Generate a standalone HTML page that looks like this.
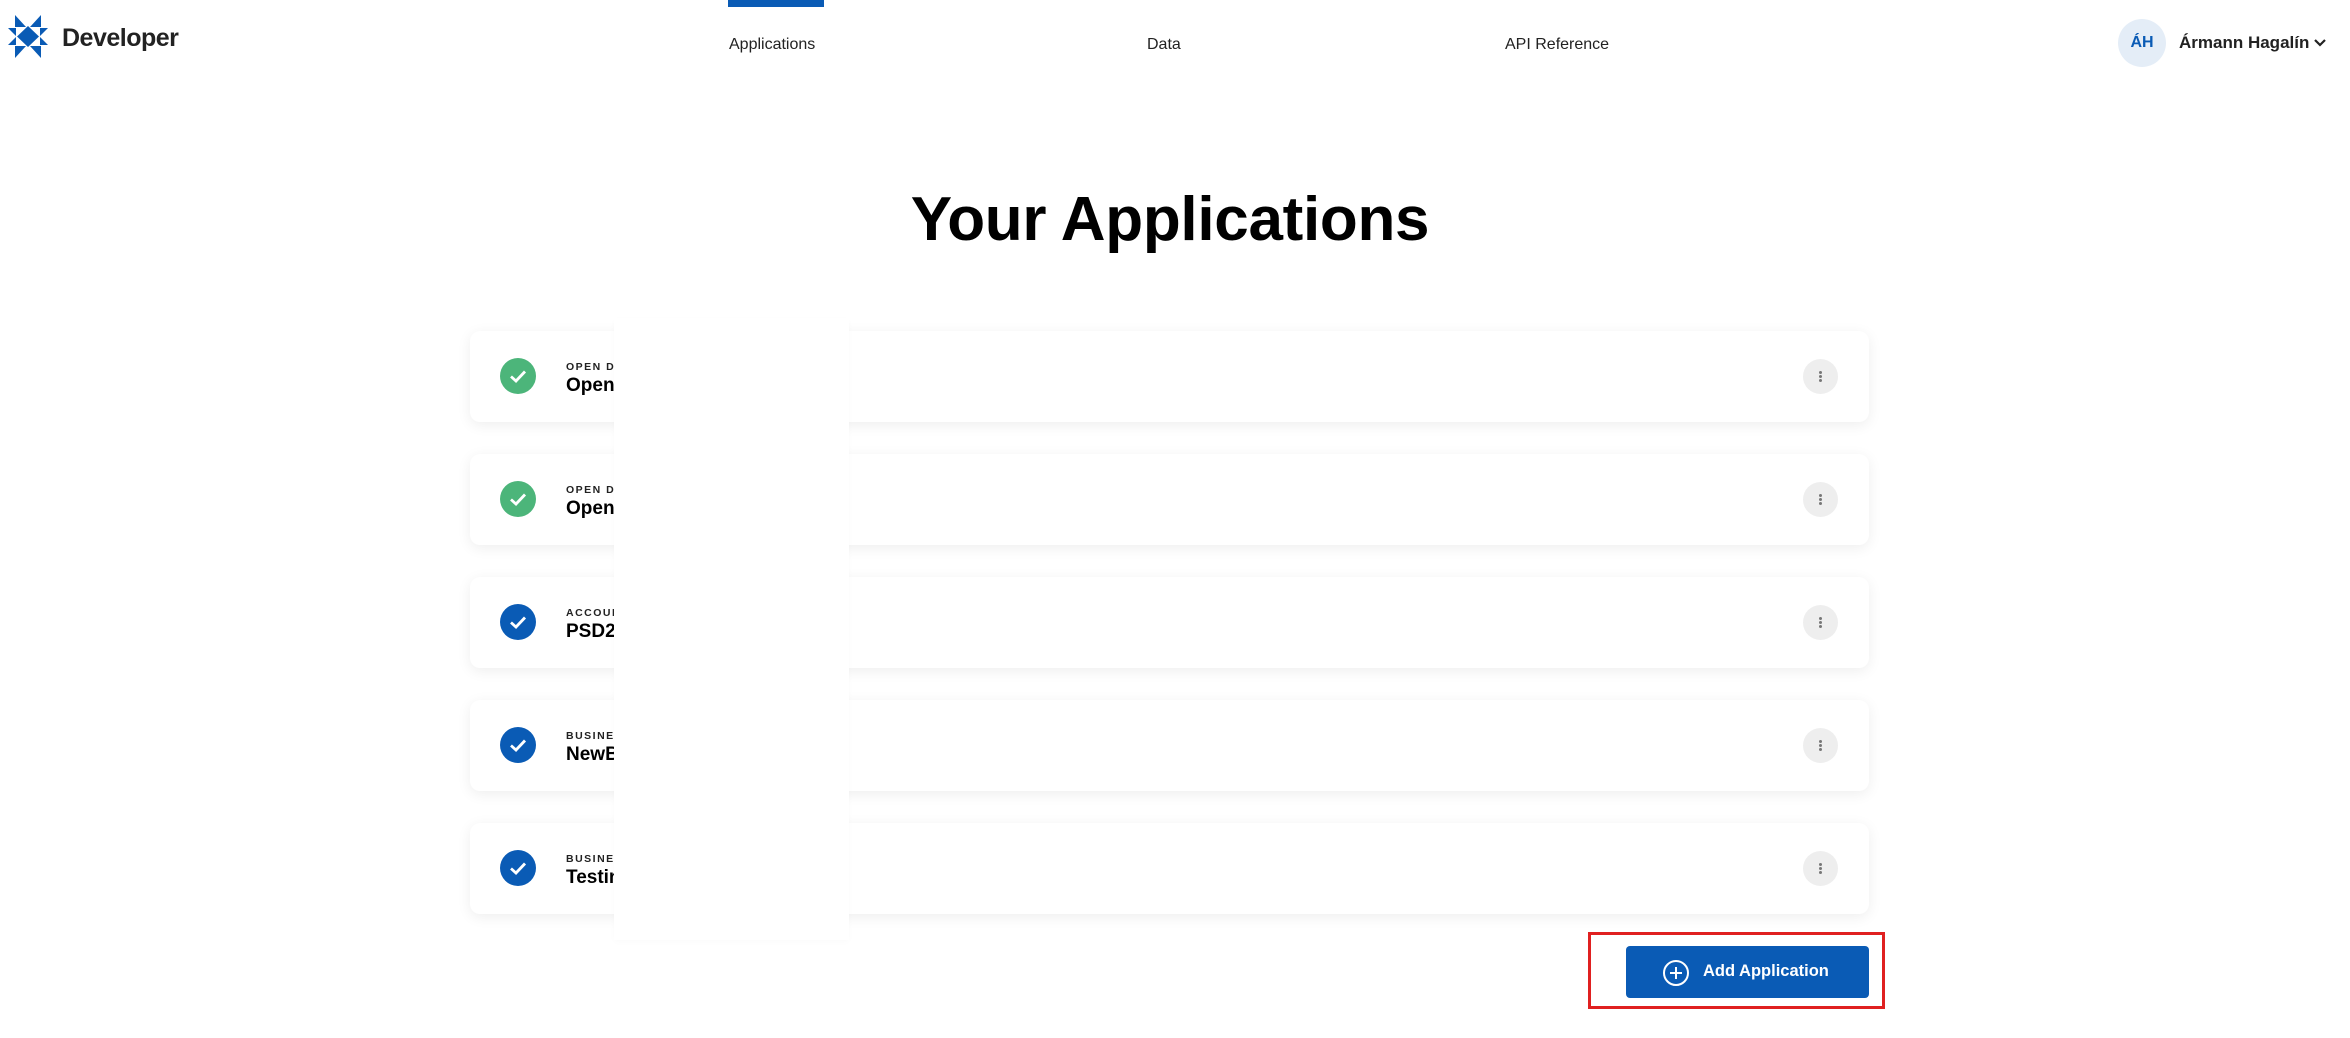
<!DOCTYPE html>
<html><head><meta charset="utf-8"><style>
*{margin:0;padding:0;box-sizing:border-box}
body{width:2350px;height:1038px;background:#fff;font-family:"Liberation Sans",Arial,sans-serif;position:relative;overflow:hidden;color:#000}
.abs{position:absolute}
.nav{font-size:16px;color:#222;top:36px}
.card{position:absolute;left:470px;width:1399px;height:91px;background:#fff;border-radius:10px;box-shadow:0 3px 14px rgba(0,0,0,0.07)}
.ic{position:absolute;left:30px;top:27px;width:36px;height:36px;border-radius:50%}
.lab{position:absolute;left:96px;top:30px;font-size:10.5px;font-weight:bold;letter-spacing:1.5px;color:#222}
.ttl{position:absolute;left:96px;top:44px;font-size:19px;font-weight:bold;color:#000}
.keb{position:absolute;left:1333px;top:28px;width:35px;height:35px;border-radius:50%;background:#eeeeee}
.keb i{position:absolute;left:16px;width:3px;height:3px;border-radius:50%;background:#777}
</style></head><body>
<svg class="abs" style="left:8px;top:15px" width="40" height="43" viewBox="0 0 40 43">
<g fill="#0a5bb5">
<polygon points="20,11 31,21.5 20,32 9,21.5"/>
<polygon points="7,0 7,12 18,12"/><polygon points="33,0 33,12 22,12"/>
<polygon points="7,43 7,31 18,31"/><polygon points="33,43 33,31 22,31"/>
<polygon points="0,13 8,13 8,21"/><polygon points="40,13 32,13 32,21"/>
<polygon points="0,30 8,30 8,22"/><polygon points="40,30 32,30 32,22"/>
</g></svg>
<div class="abs" style="left:62px;top:24px;font-size:25px;font-weight:bold;color:#222;letter-spacing:-0.5px">Developer</div>
<div class="abs" style="left:728px;top:0;width:96px;height:7px;background:#0a5bb5"></div>
<div class="abs nav" style="left:729px">Applications</div>
<div class="abs nav" style="left:1147px">Data</div>
<div class="abs nav" style="left:1505px">API Reference</div>
<div class="abs" style="left:2118px;top:19px;width:48px;height:48px;border-radius:50%;background:#e4edf7;color:#0a5bb5;font-weight:bold;font-size:16px;text-align:center;line-height:48px">ÁH</div>
<div class="abs" style="left:2179px;top:33px;font-size:17px;font-weight:bold;color:#222">Ármann Hagalín</div>
<svg class="abs" style="left:2313px;top:38px" width="14" height="10" viewBox="0 0 14 10"><path d="M2 2 L7 7 L12 2" stroke="#222" stroke-width="2.2" fill="none"/></svg>
<div class="abs" style="left:0;width:2340px;text-align:center;top:184px;font-size:62px;font-weight:bold;letter-spacing:-0.3px">Your Applications</div>

<div class="card" style="top:331px"><div class="ic" style="background:#4cb57a"><svg width="36" height="36"><path d="M11 18.5 L16 23 L25 13.5" stroke="#fff" stroke-width="2.8" fill="none"/></svg></div><div class="lab">OPEN DATA</div><div class="ttl">Open Banking</div><div class="keb"><i style="top:12px"></i><i style="top:16px"></i><i style="top:20px"></i></div></div>
<div class="card" style="top:454px"><div class="ic" style="background:#4cb57a"><svg width="36" height="36"><path d="M11 18.5 L16 23 L25 13.5" stroke="#fff" stroke-width="2.8" fill="none"/></svg></div><div class="lab">OPEN DATA</div><div class="ttl">Open Banking</div><div class="keb"><i style="top:12px"></i><i style="top:16px"></i><i style="top:20px"></i></div></div>
<div class="card" style="top:577px"><div class="ic" style="background:#0a5bb5"><svg width="36" height="36"><path d="M11 18.5 L16 23 L25 13.5" stroke="#fff" stroke-width="2.8" fill="none"/></svg></div><div class="lab">ACCOUNTS</div><div class="ttl">PSD2 App</div><div class="keb"><i style="top:12px"></i><i style="top:16px"></i><i style="top:20px"></i></div></div>
<div class="card" style="top:700px"><div class="ic" style="background:#0a5bb5"><svg width="36" height="36"><path d="M11 18.5 L16 23 L25 13.5" stroke="#fff" stroke-width="2.8" fill="none"/></svg></div><div class="lab">BUSINESS</div><div class="ttl">NewBank</div><div class="keb"><i style="top:12px"></i><i style="top:16px"></i><i style="top:20px"></i></div></div>
<div class="card" style="top:823px"><div class="ic" style="background:#0a5bb5"><svg width="36" height="36"><path d="M11 18.5 L16 23 L25 13.5" stroke="#fff" stroke-width="2.8" fill="none"/></svg></div><div class="lab">BUSINESS</div><div class="ttl">Testing</div><div class="keb"><i style="top:12px"></i><i style="top:16px"></i><i style="top:20px"></i></div></div>

<div class="abs" style="left:614px;top:318px;width:235px;height:622px;background:#fff;box-shadow:0 2px 6px rgba(0,0,0,0.02)"></div>

<div class="abs" style="left:1588px;top:932px;width:297px;height:77px;border:3px solid #e02020"></div>
<div class="abs" style="left:1626px;top:946px;width:243px;height:52px;background:#0a5bb5;border-radius:4px"></div>
<svg class="abs" style="left:1662px;top:959px" width="28" height="28" viewBox="0 0 28 28"><circle cx="14" cy="14" r="12" stroke="#fff" stroke-width="2" fill="none"/><path d="M14 8V20M8 14H20" stroke="#fff" stroke-width="2"/></svg>
<div class="abs" style="left:1703px;top:962px;font-size:16.5px;font-weight:bold;color:#fff">Add Application</div>
</body></html>
